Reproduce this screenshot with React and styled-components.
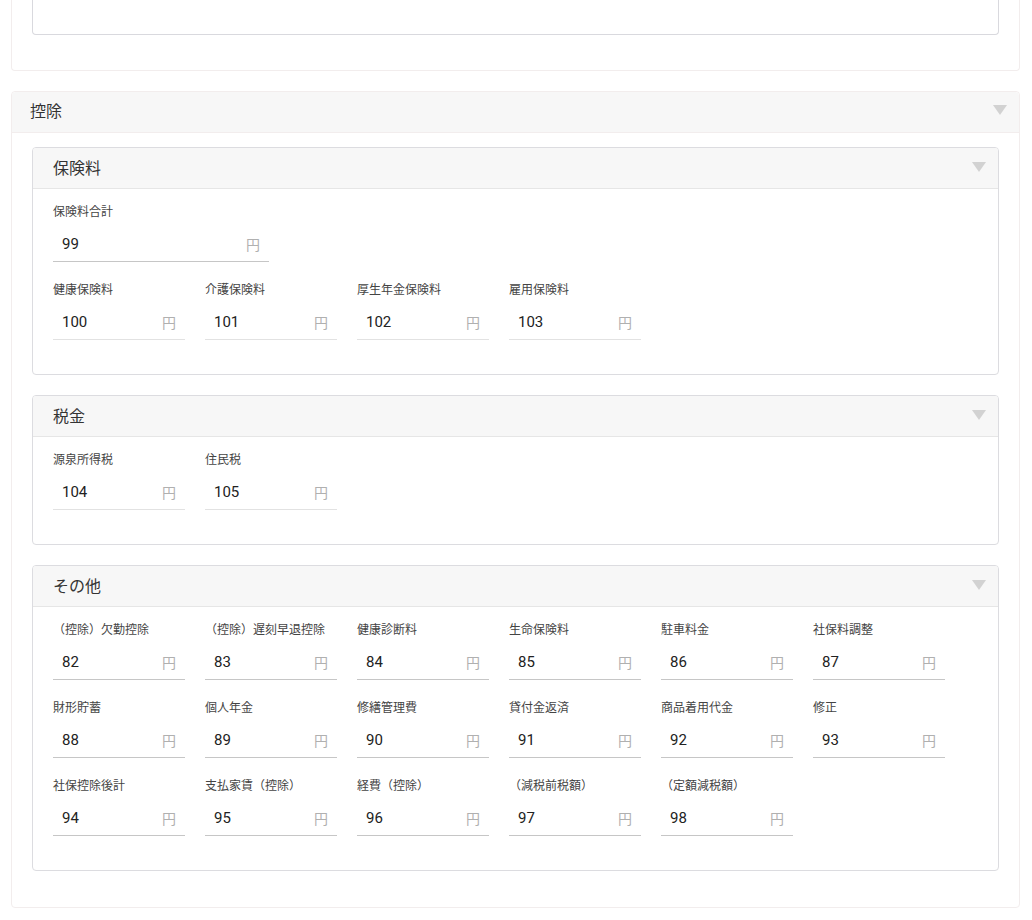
import React from "react";
import styled, { createGlobalStyle } from "styled-components";

const Global = createGlobalStyle`
  html, body { margin: 0; padding: 0; background: #fff; }
  body { font-family: Roboto, "Noto Sans CJK JP", "Noto Sans", sans-serif; color: #333; }
  * { box-sizing: border-box; }
`;

const Page = styled.div`
  padding: 0 12px 0 11px;
  display: flex;
  flex-direction: column;
  gap: 20px;
`;

const Card = styled.section`
  border: 1px solid #f2eded;
  border-top: ${(p) => (p.$clipped ? "none" : "1px solid #f2eded")};
  border-radius: ${(p) => (p.$clipped ? "0 0 4px 4px" : "4px")};
  background: #fff;
`;

const CardHeader = styled.div`
  height: 41px;
  display: flex;
  align-items: center;
  justify-content: space-between;
  padding: 0 12px 4px 18px;
  background: #f7f7f7;
  border-bottom: 1px solid #f2eded;
  font-family: "Noto Sans CJK JP", sans-serif;
  font-size: 16px;
  line-height: 20px;
  color: #333;
  border-radius: 4px 4px 0 0;
`;

const CardBody = styled.div`
  padding: ${(p) => (p.$clipped ? "0 20px 35px" : "14px 20px 36px")};
  display: flex;
  flex-direction: column;
  gap: 20px;
`;

const EmptyBox = styled.div`
  height: 35px;
  border: 1px solid #d9d9de;
  border-top: none;
  border-radius: 0 0 4px 4px;
`;

const SubCard = styled.section`
  border: 1px solid #dcdce0;
  border-radius: 4px;
  overflow: hidden;
`;

const SubHeader = styled.div`
  height: 41px;
  display: flex;
  align-items: center;
  justify-content: space-between;
  padding: 0 12px 3px 20px;
  background: #f7f7f7;
  border-bottom: 1px solid #e6e6e6;
  font-family: "Noto Sans CJK JP", sans-serif;
  font-size: 16px;
  line-height: 20px;
  color: #333;
`;

const SubBody = styled.div`
  padding: 15px 20px 34px;
  display: flex;
  flex-direction: column;
  gap: 20px;
`;

const FieldRow = styled.div`
  display: flex;
  flex-wrap: wrap;
  column-gap: 20px;
  row-gap: 20px;
  max-width: ${(p) => (p.$max ? p.$max : "none")};
`;

const Field = styled.div`
  width: ${(p) => (p.$wide ? "216px" : "132px")};
  display: flex;
  flex-direction: column;
`;

const Label = styled.label`
  display: block;
  font-family: "Noto Sans CJK JP", sans-serif;
  font-size: 12px;
  line-height: 14px;
  height: 14px;
  color: #444;
  white-space: nowrap;
`;

const InputWrap = styled.div`
  margin-top: 6px;
  height: 38px;
  display: flex;
  align-items: center;
  justify-content: space-between;
  padding: 3px 9px 0 9px;
  border-bottom: 1px solid ${(p) => (p.$strong ? "#c6c6c6" : "#e2e2e2")};
`;

const Value = styled.span`
  font-family: Roboto, sans-serif;
  font-size: 15px;
  line-height: 18px;
  color: #222;
`;

const Unit = styled.span`
  font-family: "Noto Sans CJK JP", sans-serif;
  font-size: 14px;
  line-height: 18px;
  color: #b0b0b0;
`;

const Caret = () => (
  <svg width="14" height="10" viewBox="0 0 14 10" aria-hidden="true">
    <polygon points="0,0 14,0 7,10" fill="#d2d2d2" />
  </svg>
);

const Input = ({ label, value, wide, strong }) => (
  <Field $wide={wide}>
    <Label>{label}</Label>
    <InputWrap $strong={strong}>
      <Value>{value}</Value>
      <Unit>円</Unit>
    </InputWrap>
  </Field>
);

const Section = ({ title, children }) => (
  <SubCard>
    <SubHeader>
      <span>{title}</span>
      <Caret />
    </SubHeader>
    <SubBody>{children}</SubBody>
  </SubCard>
);

const others = [
  ["（控除）欠勤控除", 82],
  ["（控除）遅刻早退控除", 83],
  ["健康診断料", 84],
  ["生命保険料", 85],
  ["駐車料金", 86],
  ["社保料調整", 87],
  ["財形貯蓄", 88],
  ["個人年金", 89],
  ["修繕管理費", 90],
  ["貸付金返済", 91],
  ["商品着用代金", 92],
  ["修正", 93],
  ["社保控除後計", 94],
  ["支払家賃（控除）", 95],
  ["経費（控除）", 96],
  ["（減税前税額）", 97],
  ["（定額減税額）", 98],
];

export default function App() {
  return (
    <>
      <Global />
      <Page>
        <Card $clipped>
          <CardBody $clipped>
            <EmptyBox />
          </CardBody>
        </Card>
        <Card>
          <CardHeader>
            <span>控除</span>
            <Caret />
          </CardHeader>
          <CardBody>
            <Section title="保険料">
              <FieldRow>
                <Input label="保険料合計" value="99" wide strong />
              </FieldRow>
              <FieldRow>
                <Input label="健康保険料" value="100" />
                <Input label="介護保険料" value="101" />
                <Input label="厚生年金保険料" value="102" />
                <Input label="雇用保険料" value="103" />
              </FieldRow>
            </Section>
            <Section title="税金">
              <FieldRow>
                <Input label="源泉所得税" value="104" />
                <Input label="住民税" value="105" />
              </FieldRow>
            </Section>
            <Section title="その他">
              <FieldRow $max="932px">
                {others.map(([l, v]) => (
                  <Input key={l} label={l} value={String(v)} strong />
                ))}
              </FieldRow>
            </Section>
          </CardBody>
        </Card>
      </Page>
    </>
  );
}
